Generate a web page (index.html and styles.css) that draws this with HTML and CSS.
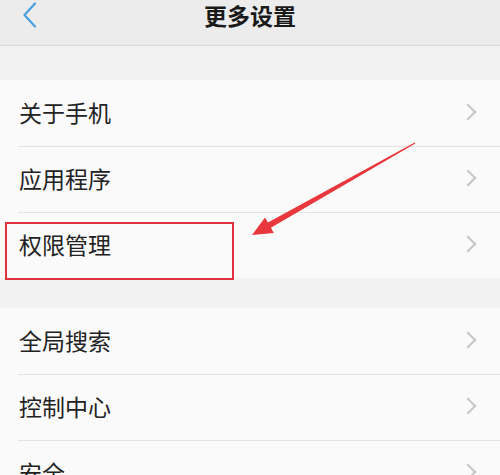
FILE: index.html
```html
<!DOCTYPE html>
<html lang="zh">
<head>
<meta charset="utf-8">
<link rel="stylesheet" href="styles.css">
</head>
<body>
<div class="screen">
  <header class="topbar">
    <svg class="back" width="16" height="26" viewBox="0 0 16 26"><path d="M13 1.5 L2.5 13 L13 24.5" fill="none" stroke="#4a9fe0" stroke-width="2.2" stroke-linecap="round" stroke-linejoin="round"/></svg>
    <h1 class="title">更多设置</h1>
  </header>
  <div class="gap first"></div>
  <ul class="group">
    <li class="row"><span>关于手机</span><i class="chev"></i></li>
    <li class="row"><span>应用程序</span><i class="chev"></i></li>
    <li class="row highlight"><span>权限管理</span><i class="chev"></i></li>
  </ul>
  <div class="gap"></div>
  <ul class="group">
    <li class="row"><span>全局搜索</span><i class="chev"></i></li>
    <li class="row"><span>控制中心</span><i class="chev"></i></li>
    <li class="row"><span>安全</span><i class="chev"></i></li>
  </ul>
  <svg class="arrow" width="500" height="475" viewBox="0 0 500 475">
    <polygon points="415.3,143.5 270.9,227.8 273.8,233 252,235 265,217.4 267.9,222.6 414.7,142.5" fill="#e8383d"/>
  </svg>
</div>
</body>
</html>
```
FILE: styles.css
```css
* { box-sizing: border-box; }
html, body { margin: 0; padding: 0; }
body {
  width: 500px;
  height: 475px;
  overflow: hidden;
  background: #f2f2f2;
  font-family: "Noto Sans CJK SC", "Noto Sans", sans-serif;
  color: #222;
}
.screen { position: relative; width: 500px; height: 475px; overflow: hidden; }
.topbar {
  height: 46px;
  background: #ececec;
  border-bottom: 1px solid #d8d8d8;
  display: flex;
  align-items: flex-start;
  justify-content: center;
  position: relative;
}
.back { position: absolute; left: 22px; top: 2px; }
.title {
  margin: 0;
  padding-top: 1px;
  font-size: 23px;
  font-weight: 600;
  line-height: 28px;
  color: #1a1a1a;
}
.gap { height: 30px; background: #f2f2f2; }
.gap.first { height: 34px; }
.group { list-style: none; margin: 0; padding: 0; background: #fafafa; }
.row {
  height: 66px;
  display: flex;
  align-items: center;
  justify-content: space-between;
  padding: 0 22px 3px 19px;
  position: relative;
  font-size: 23px;
}
.row + .row::before {
  content: "";
  position: absolute;
  left: 18px;
  right: 0;
  top: 0;
  height: 1px;
  background: #e4e4e4;
}
.row span { line-height: 30px; }
.chev {
  width: 12px;
  height: 12px;
  border-top: 2px solid #c6c6c6;
  border-right: 2px solid #c6c6c6;
  transform: rotate(45deg);
  margin-right: 4px;
}
.highlight::after {
  content: "";
  position: absolute;
  left: 5px;
  top: 10px;
  width: 225px;
  height: 54px;
  border: 2px solid #e0323c;
}
.arrow { position: absolute; left: 0; top: 0; pointer-events: none; }
```
